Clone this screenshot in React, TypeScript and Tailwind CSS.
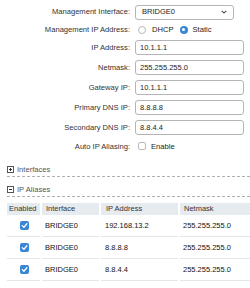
import { useState } from 'react';

const font = { fontFamily: '"Liberation Sans", Arial, sans-serif' };

function FieldRow(props: { label: string; className?: string; children: React.ReactNode }) {
  return (
    <div className={`flex items-center ${props.className ?? ''}`}>
      <div className="w-[131px] shrink-0 pr-[1px] text-right text-[7.6px] text-[#333]">{props.label}</div>
      <div className="ml-[4px] flex flex-1 items-center">{props.children}</div>
    </div>
  );
}

function TextInput(props: { value: string }) {
  return (
    <div className="flex h-[15px] w-[109px] items-center rounded-[3px] border border-[#b5b5b5] bg-white pl-[4px] text-[7.5px] text-[#222]">
      {props.value}
    </div>
  );
}

function Radio(props: { checked?: boolean }) {
  return props.checked ? (
    <span className="flex h-[8px] w-[8px] shrink-0 items-center justify-center rounded-full bg-[#3a86d6]">
      <span className="block h-[3px] w-[3px] rounded-full bg-white" />
    </span>
  ) : (
    <span className="block h-[8px] w-[8px] shrink-0 rounded-full border border-[#b9b9b9] bg-white" />
  );
}

function CheckedBox() {
  return (
    <span className="flex h-[9px] w-[9px] items-center justify-center rounded-[2px] bg-[#3a86d6]">
      <svg width="7" height="7" viewBox="0 0 7 7" fill="none">
        <path d="M1.2 3.6 L2.9 5.2 L5.9 1.8" stroke="white" strokeWidth="1.3" strokeLinecap="round" strokeLinejoin="round" />
      </svg>
    </span>
  );
}

function SectionHeader(props: { title: string; open?: boolean }) {
  return (
    <div className="ml-[7px] flex h-[14px] items-center gap-[3px] border-b border-dashed border-[#b0b0b0]">
      <span className="relative flex h-[7px] w-[7px] items-center justify-center border border-[#555]">
        <span className="h-px w-[3px] bg-[#333]" />
        {!props.open && <span className="absolute h-[3px] w-px bg-[#333]" />}
      </span>
      <span className="text-[7.6px] text-[#555]">{props.title}</span>
    </div>
  );
}

const aliases = [
  { iface: 'BRIDGE0', ip: '192.168.13.2', mask: '255.255.255.0' },
  { iface: 'BRIDGE0', ip: '8.8.8.8', mask: '255.255.255.0' },
  { iface: 'BRIDGE0', ip: '8.8.4.4', mask: '255.255.255.0' },
];

export default function App() {
  const [mode] = useState('static');

  return (
    <div className="h-[288px] w-[250px] overflow-hidden bg-white" style={font}>
      <div className="pt-[4px]">
        <FieldRow label="Management Interface:" className="h-[16px]">
          <div className="flex h-[15px] w-[99px] items-center justify-between rounded-[3px] border border-[#b5b5b5] bg-white pl-[6px] pr-[6px] text-[7.5px] text-[#222]">
            <span>BRIDGE0</span>
            <svg width="6" height="4" viewBox="0 0 6 4" fill="none">
              <path d="M0.7 0.8 L3 3 L5.3 0.8" stroke="#555" strokeWidth="1.1" />
            </svg>
          </div>
        </FieldRow>
        <FieldRow label="Management IP Address:" className="h-[20px]">
          <div className="flex items-center text-[7.6px] text-[#222]">
            <span className="ml-[3px]"><Radio checked={mode === 'dhcp'} /></span>
            <span className="ml-[6px]">DHCP</span>
            <span className="ml-[6px]"><Radio checked={mode === 'static'} /></span>
            <span className="ml-[5px]">Static</span>
          </div>
        </FieldRow>
        <div className="flex flex-col gap-[5px]">
          <FieldRow label="IP Address:"><TextInput value="10.1.1.1" /></FieldRow>
          <FieldRow label="Netmask:"><TextInput value="255.255.255.0" /></FieldRow>
          <FieldRow label="Gateway IP:"><TextInput value="10.1.1.1" /></FieldRow>
          <FieldRow label="Primary DNS IP:"><TextInput value="8.8.8.8" /></FieldRow>
          <FieldRow label="Secondary DNS IP:"><TextInput value="8.8.4.4" /></FieldRow>
        </div>
        <FieldRow label="Auto IP Aliasing:" className="mt-[1px] h-[21px]">
          <span className="ml-[3px] h-[8px] w-[8px] rounded-[2px] border border-[#b9b9b9] bg-white" />
          <span className="ml-[5px] text-[7.6px] text-[#222]">Enable</span>
        </FieldRow>
      </div>

      <div className="mt-[6px]">
        <SectionHeader title="Interfaces" />
      </div>
      <div className="mt-[6px]">
        <SectionHeader title="IP Aliases" open />
      </div>

      <div className="ml-[7px] mt-[6px] grid grid-cols-[33px_57px_77px_1fr] gap-x-[2px] text-[7.5px]">
        <div className="flex h-[12px] items-center bg-[#e6ebf0] pl-[2px] text-[#333]">Enabled</div>
        <div className="flex h-[12px] items-center bg-[#e6ebf0] pl-[4px] text-[#333]">Interface</div>
        <div className="flex h-[12px] items-center bg-[#e6ebf0] pl-[5px] text-[#333]">IP Address</div>
        <div className="flex h-[12px] items-center bg-[#e6ebf0] pl-[4px] text-[#333]">Netmask</div>
        {aliases.map((a, i) => (
          <div key={i} className="contents">
            <div className="flex h-[22px] items-center justify-center border-b border-[#e2e7ec] pl-[2px]">
              <CheckedBox />
            </div>
            <div className="flex h-[22px] items-center border-b border-[#e2e7ec] pl-[3px] text-[#111]">{a.iface}</div>
            <div className="flex h-[22px] items-center border-b border-[#e2e7ec] pl-[4px] text-[#111]">{a.ip}</div>
            <div className="flex h-[22px] items-center border-b border-[#e2e7ec] pl-[3px] text-[#111]">{a.mask}</div>
          </div>
        ))}
      </div>
    </div>
  );
}
